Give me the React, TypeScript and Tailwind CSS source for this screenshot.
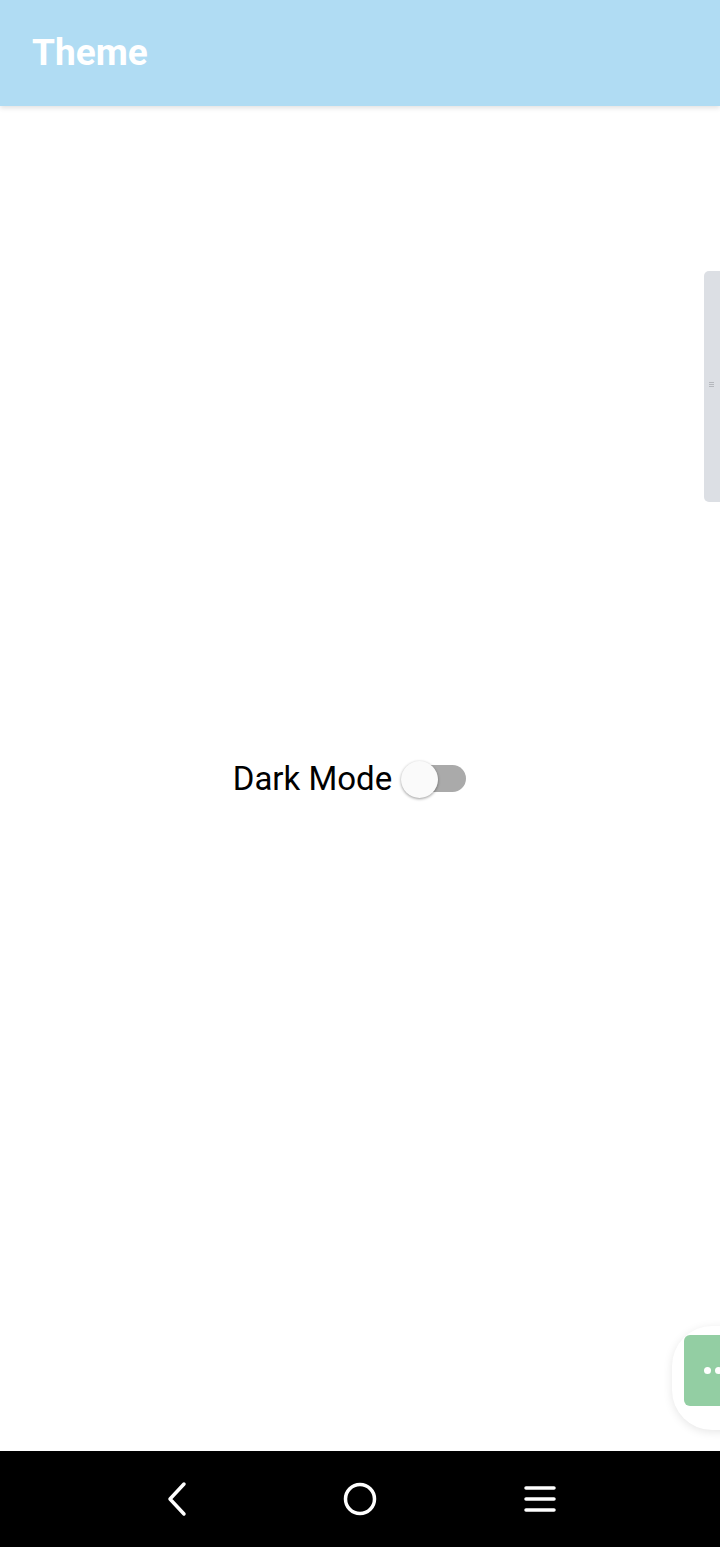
import React from 'react'

export default function App() {
  return (
    <div
      className="relative flex flex-col h-[1547px] w-[720px] overflow-hidden bg-white"
      style={{ fontFamily: 'Roboto, "Liberation Sans", sans-serif' }}
    >
      <header className="h-[106px] shrink-0 bg-[#b0dcf3] flex items-center px-[32px] shadow-[0_2px_5px_rgba(0,0,0,0.12)] z-10">
        <h1 className="text-[37px] font-bold text-white">Theme</h1>
      </header>

      <main className="flex-1 flex items-center justify-center">
        <div className="flex items-center gap-[9px] ml-[-20px]">
          <span className="text-[33px] text-black">Dark Mode</span>
          <div className="relative w-[66px] h-[38px] flex items-center">
            <div className="ml-[4px] w-[61px] h-[27px] rounded-full bg-[#aaaaaa]" />
            <div className="absolute left-0 top-[1px] w-[37px] h-[37px] rounded-full bg-[#fafafa] shadow-[0_1px_3px_rgba(0,0,0,0.4)]" />
          </div>
        </div>
      </main>

      {/* side drawer handle */}
      <div className="absolute right-0 top-[271px] w-[16px] h-[231px] rounded-l-[5px] bg-[#dcdfe4] flex items-center pl-[5px]">
        <div className="flex flex-col gap-[1px] mb-[4px]">
          <div className="w-[5px] h-[1px] bg-[#b5b8bd]" />
          <div className="w-[5px] h-[1px] bg-[#b5b8bd]" />
          <div className="w-[5px] h-[1px] bg-[#b5b8bd]" />
        </div>
      </div>

      {/* floating button */}
      <div className="absolute left-[672px] top-[1326px] w-[110px] h-[104px] rounded-[40px] bg-white shadow-[0_2px_10px_rgba(0,0,0,0.1)]">
        <div className="absolute left-[12px] top-[9px] w-[70px] h-[71px] rounded-[6px] bg-[#93cea3] flex items-center pl-[20px] gap-[4px]">
          <div className="w-[7px] h-[7px] rounded-full bg-white" />
          <div className="w-[7px] h-[7px] rounded-full bg-white" />
        </div>
      </div>

      <nav className="h-[96px] shrink-0 bg-black flex items-center justify-center">
        <div className="flex items-center justify-between w-[392px]">
          <svg width="32" height="36" viewBox="0 0 32 36">
            <path d="M20 3 L6 18 L20 33" fill="none" stroke="white" strokeWidth="3.5" strokeLinecap="round" strokeLinejoin="round" />
          </svg>
          <svg width="36" height="36" viewBox="0 0 36 36">
            <circle cx="18" cy="18" r="14.5" fill="none" stroke="white" strokeWidth="3.5" />
          </svg>
          <svg width="32" height="36" viewBox="0 0 32 36">
            <path d="M2 7 H30 M2 18 H30 M2 29 H30" stroke="white" strokeWidth="3.5" strokeLinecap="round" />
          </svg>
        </div>
      </nav>
    </div>
  )
}
